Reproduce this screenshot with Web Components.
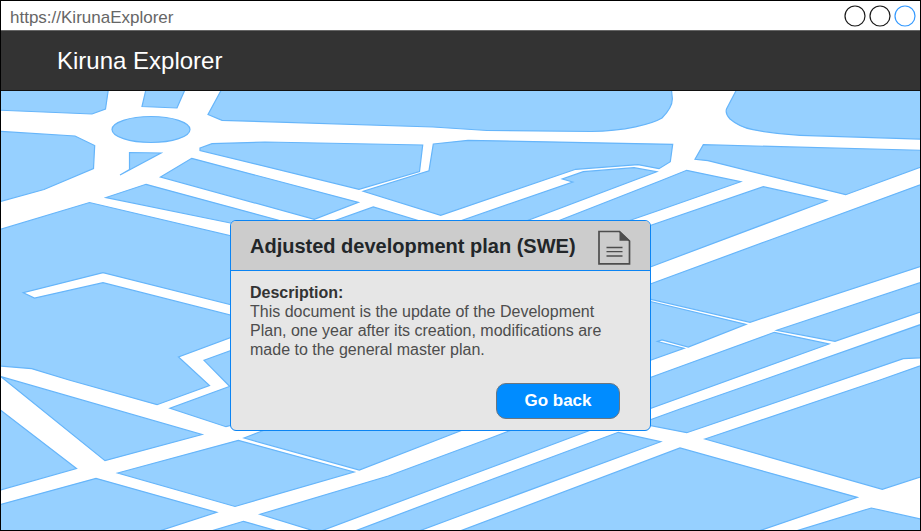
<!DOCTYPE html>
<html lang="en">
<head>
<meta charset="utf-8">
<title>Kiruna Explorer</title>
<style>
  body { margin: 0; font-family: "Liberation Sans", Arial, sans-serif; font-size: 16px; line-height: 19px; color: #4d4d4d; }
</style>
</head>
<body>
<browser-frame address="https://KirunaExplorer">
  <app-header>Kiruna Explorer</app-header>
  <map-stage>
    <document-card heading="Adjusted development plan (SWE)" label="Description:">
      This document is the update of the Development Plan, one year after its creation, modifications are made to the general master plan.
      <action-button slot="actions">Go back</action-button>
    </document-card>
  </map-stage>
</browser-frame>

<script>
class BaseElement extends HTMLElement {
  constructor() {
    super();
    this.attachShadow({ mode: "open" }).innerHTML = this.render();
  }
}

customElements.define("browser-frame", class extends BaseElement {
  render() {
    return `
      <style>
        :host { display: flex; flex-direction: column; box-sizing: border-box; min-height: 100vh; border: 1px solid #000; background: #fff; }
        .bar { display: flex; align-items: center; justify-content: space-between; box-sizing: border-box; height: 30px; padding: 0 4px 0 9px; border-bottom: 1px solid #666; }
        .address { font-size: 17px; line-height: 20px; color: #666; padding-top: 4px; }
        .dots { display: flex; gap: 3px; }
        svg { display: block; width: 22px; height: 22px; fill: none; stroke: #1a1a1a; stroke-width: 1.2; }
        svg:last-child { stroke: #3399ff; }
      </style>
      <div class="bar">
        <span class="address">${this.getAttribute("address")}</span>
        <div class="dots">
          <svg viewBox="0 0 22 22"><circle cx="11" cy="11" r="10"/></svg>
          <svg viewBox="0 0 22 22"><circle cx="11" cy="11" r="10"/></svg>
          <svg viewBox="0 0 22 22"><circle cx="11" cy="11" r="10"/></svg>
        </div>
      </div>
      <slot></slot>`;
  }
});

customElements.define("app-header", class extends BaseElement {
  render() {
    return `
      <style>
        :host { display: flex; align-items: center; box-sizing: border-box; height: 60px; padding: 0 56px; background: #333; border-bottom: 1px solid #111; }
        h1 { margin: 0; font-size: 24px; line-height: 28px; font-weight: 400; color: #fff; }
      </style>
      <h1><slot></slot></h1>`;
  }
});

customElements.define("map-stage", class extends BaseElement {
  render() {
    return `
      <style>
        :host { display: flex; flex: 1; align-items: center; justify-content: center; position: relative; overflow: hidden; box-sizing: border-box; padding: 30px 40px 0 0; }
        .map { position: absolute; inset: 0; width: 100%; height: 100%; fill: #96d0ff; stroke: #66b5fa; stroke-width: 1.2; }
        slot { display: contents; }
      </style>
      <svg class="map" viewBox="1 91 919 439" preserveAspectRatio="xMidYMid slice" aria-hidden="true">
        <path d="M-5 85H109L105.500 109 92 114-5 110Z"/>
        <path d="M147 85H187L177 108 142 106.500Z"/>
        <ellipse cx="151" cy="129.500" rx="39" ry="13"/>
        <path d="M224 85L208 114.500 222 120.300 433 127 487 130.500 591 131.500C625 131 652 124 662 118Q673 107 672.300 98L671 85Z"/>
        <path d="M739 85L726.500 109Q725 114 730 119C737 125 744 128 753 129.700Q775 134 800 135.300L925 139.200V85Z"/>
        <path d="M-5 131L75 136 94.700 145.500 93.500 168.500 44 189.500-5 203Z"/>
        <path d="M120 175L129.500 169.500V152.500L161 153Z"/>
        <path d="M200 148L212 143.700 265 142 422.700 145 419.500 171.500 359 189.300 200 150.500Z"/>
        <path d="M191.700 158.300L358.300 202.300 314.300 219.300 160.500 177Z"/>
        <path d="M146 184.300L300 226 250 227 106 197.500Z"/>
        <path d="M-5 231L89.500 202.500 240 238V307L103 272.700 23.300 292.700 34.500 298 103 282.700 240 317.500V334L178.500 357 209.500 385.500 157 404.700 69 380 31.700 368.700-5 365.500Z"/>
        <path d="M204 360.300L260 340V420L229.300 386Z"/>
        <path d="M240 382L229.300 386.500 170 408.300 226 426.700 240 423Z"/>
        <path d="M1 376.700L105 460.700 202 434.500Z"/>
        <path d="M-5 406L76.500 468.500-5 491.500Z"/>
        <path d="M-5 506L96 478.300 216.700 512.300 150 534H-5Z"/>
        <path d="M117.700 473L238.300 440.300 354 472 235 506.500Z"/>
        <path d="M244 438L275 426H473L359.300 470Z"/>
        <path d="M201 534L243.500 521.300 288 534Z"/>
        <path d="M260 514.300L388.300 476 490 438.300 651 377.300 774.300 332.300 829 344 589 430.700 460 479 313 534 311 530Z"/>
        <path d="M776.700 330.300L925 281V310.500L835 341.300Z"/>
        <path d="M600 302L651 283.700 770 240 925 183V265L750 322.300 651 299.300Z"/>
        <path d="M640 299L746 324.300 688.300 347 662 340 657.500 341.500 684 348.300 640 364Z"/>
        <path d="M347 534L460 491.300 618.300 432.300 660.700 441.700 460 515.700 411 534Z"/>
        <path d="M452 534L680 448 857.300 497.300 750 534Z"/>
        <path d="M786 534L871.300 508 925 520V534Z"/>
        <path d="M705 439L880 380 925 364V475.500L882.300 489.300Z"/>
        <path d="M640 423.500L680 409 763 380 925 323V357.500L903.300 358.700 783 400 686.700 432.700Z"/>
        <path d="M433.300 144L468 140.300 672.700 144.300 670.300 161.700 659 168.700 638 164.700 575.700 169.300 440.700 215.300 363.300 191.300 429 170.700Z"/>
        <path d="M440 228L572.700 182 562.300 179 583.300 171.700 634 167.700 656.700 171.700 505 229Z"/>
        <path d="M314 228L373.300 207 443 228Z"/>
        <path d="M540 228L660 181 686.700 170.300 740.700 181.700 660 210 605 229Z"/>
        <path d="M640 229L763.300 186.700 826.700 200.700 651 266.700 640 270Z"/>
        <path d="M703.300 144.700L925 150.400V165.500L845.700 194.700 708 160.700 695 159.300Z"/>
      </svg>
      <slot></slot>`;
  }
});

customElements.define("document-card", class extends BaseElement {
  render() {
    return `
      <style>
        :host { display: block; position: relative; box-sizing: border-box; width: 100%; max-width: 421px; border: 1px solid #0b84f3; border-radius: 6px; background: #e6e6e6; overflow: hidden; }
        header { display: flex; align-items: center; justify-content: space-between; box-sizing: border-box; height: 50px; padding: 4px 19px 0; background: #ccc; border-bottom: 1px solid #0b84f3; }
        h2 { margin: 0 0 3px; font-size: 20px; line-height: 24px; color: #222629; }
        svg { display: block; width: 33px; height: 35px; }
        section { padding: 12px 30px 11px 19px; }
        h3 { margin: 0; font-size: 16px; line-height: 19px; color: #333; }
        p { margin: 0; padding-right: 10px; }
        footer { display: flex; justify-content: flex-end; margin-top: 24px; }
      </style>
      <header>
        <h2>${this.getAttribute("heading")}</h2>
        <svg viewBox="0 0 33 35" fill="none" stroke="#4d4d4d" aria-hidden="true">
          <path stroke-width="1.700" d="M1 1.500H21.500L31.500 11V33.800H1Z"/>
          <path fill="#4d4d4d" stroke="none" d="M21.500 1L32 10.800H21.500Z"/>
          <path stroke-width="1.300" d="M8.500 17.500H24.500M8.500 21.700H24.500M8.500 26H24.500"/>
        </svg>
      </header>
      <section>
        <h3>${this.getAttribute("label")}</h3>
        <p><slot></slot></p>
        <footer><slot name="actions"></slot></footer>
      </section>`;
  }
});

customElements.define("action-button", class extends BaseElement {
  render() {
    return `
      <style>
        :host { display: block; }
        button { display: block; box-sizing: border-box; width: 124px; height: 36px; padding: 0; border: 1px solid #6b7680; border-radius: 10px; background: #008cff; color: #fff; font: bold 17px/20px "Liberation Sans", Arial, sans-serif; cursor: pointer; }
      </style>
      <button type="button"><slot></slot></button>`;
  }
});
</script>
</body>
</html>
